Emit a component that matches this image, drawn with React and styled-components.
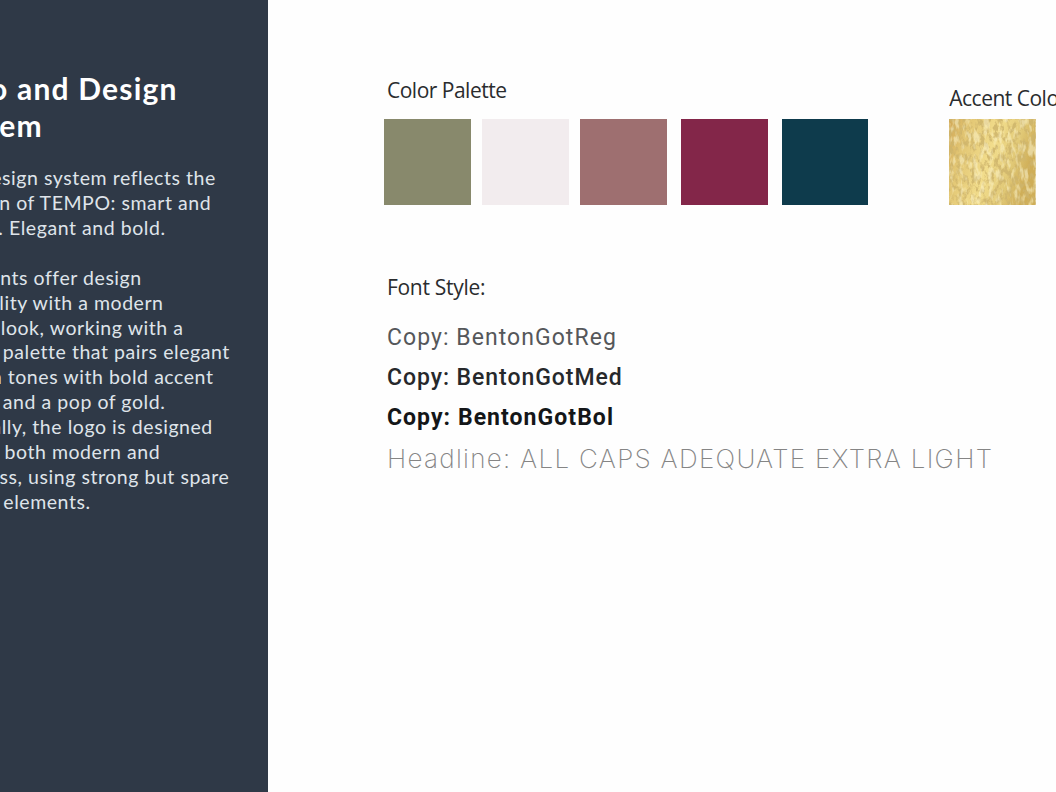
import React from "react";
import styled, { createGlobalStyle } from "styled-components";

const Global = createGlobalStyle`
  html, body { margin: 0; padding: 0; background: #fefefe; overflow: hidden; }
`;

const Page = styled.div`
  display: flex;
  width: 1056px;
  height: 792px;
  overflow: hidden;
  background: #fefefe;
`;

const Sidebar = styled.aside`
  flex: 0 0 268px;
  box-sizing: border-box;
  overflow: hidden;
  background: #2f3947;
  padding-top: 70px;
`;

const SidebarInner = styled.div`
  width: 330px;
  margin-left: -48px;
`;

const SideTitle = styled.h1`
  margin: 0 0 22px -13px;
  font: 700 30px/37px "Lato", sans-serif;
  color: #ffffff;
  letter-spacing: 1.2px;
  white-space: nowrap;
`;

const SideCopy = styled.p`
  margin: 0;
  font: 400 19.5px/24.92px "Lato", sans-serif;
  color: #dfe4ea;
  letter-spacing: 0.55px;
  white-space: pre;
`;

const Main = styled.main`
  flex: 1;
  min-width: 0;
  padding: 76px 0 0 116.3px;
`;

const PaletteRow = styled.section`
  display: flex;
  width: 720px;
`;

const PaletteGroup = styled.div`
  flex: 0 0 auto;
  margin-right: ${(p) => p.$after || 0}px;
`;

const GroupLabel = styled.div`
  height: 42.7px;
  padding: ${(p) => (p.$low ? "8px" : "0")} 0 0 ${(p) => p.$indent || 0}px;
  box-sizing: border-box;
  font: 400 21px/28px "Open Sans", sans-serif;
  letter-spacing: -0.5px;
  color: #2a2c2e;
  white-space: nowrap;
`;

const Swatches = styled.div`
  display: flex;
`;

const Swatch = styled.div`
  width: 86.6px;
  height: 86.6px;
  margin-right: ${(p) => p.$gap || 0}px;
  background: ${(p) => p.$color};
`;

const GoldSwatch = styled.svg`
  display: block;
  width: 86.6px;
  height: 86.6px;
`;

const FontSection = styled.section`
  margin: 66px 0 0 2.7px;
`;

const FontLabel = styled.div`
  margin-bottom: 17px;
  padding-top: 2px;
  font: 400 21px/28px "Open Sans", sans-serif;
  letter-spacing: -0.3px;
  color: #2a2c2e;
`;

const CopySample = styled.div`
  height: 39.7px;
  font: ${(p) => p.$weight} 23px/40px "Roboto", sans-serif;
  letter-spacing: ${(p) => p.$track}px;
  color: ${(p) => p.$color};
  white-space: nowrap;
`;

const Headline = styled.div`
  margin-top: 2px;
  font: 200 26px/40px "Inter", sans-serif;
  letter-spacing: 1.3px;
  color: #858585;
  white-space: nowrap;
`;

const swatches = [
  { color: "#88896c", gap: 11.6 },
  { color: "#f2ecee", gap: 11.2 },
  { color: "#9e6f70", gap: 14.1 },
  { color: "#832649", gap: 14.1 },
  { color: "#0e3b4c", gap: 0 },
];

const bodyText = `Its design system reflects the
notion of TEMPO: smart and
sleek. Elegant and bold.

All fonts offer design
usability with a modern
crisp look, working with a
color palette that pairs elegant
warm tones with bold accent
color and a pop of gold.
Visually, the logo is designed
to be both modern and
ageless, using strong but spare
basic elements.`;

function GoldLeaf() {
  return (
    <GoldSwatch viewBox="0 0 87 87" aria-hidden="true">
      <defs>
        <linearGradient id="goldBase" x1="0" y1="0" x2="1" y2="0.3">
          <stop offset="0" stopColor="#d0a654" />
          <stop offset="0.22" stopColor="#e2c674" />
          <stop offset="0.55" stopColor="#f2dd8c" />
          <stop offset="0.8" stopColor="#e2ca78" />
          <stop offset="1" stopColor="#cfae58" />
        </linearGradient>
        <filter id="goldGrain" x="0" y="0" width="100%" height="100%">
          <feTurbulence type="fractalNoise" baseFrequency="0.22 0.14" numOctaves="4" seed="7" />
          <feColorMatrix
            type="matrix"
            values="0 0 0 0 0.62  0 0 0 0 0.46  0 0 0 0 0.15  5 0 0 0 -2.2"
          />
        </filter>
        <filter id="goldShine" x="0" y="0" width="100%" height="100%">
          <feTurbulence type="fractalNoise" baseFrequency="0.2 0.08" numOctaves="3" seed="23" />
          <feColorMatrix
            type="matrix"
            values="0 0 0 0 0.97  0 0 0 0 0.9  0 0 0 0 0.58  0 4.5 0 0 -2.2"
          />
        </filter>
      </defs>
      <rect width="87" height="87" fill="url(#goldBase)" />
      <rect width="87" height="87" filter="url(#goldGrain)" opacity="0.85" />
      <rect width="87" height="87" filter="url(#goldShine)" opacity="0.55" />
    </GoldSwatch>
  );
}

export default function App() {
  return (
    <Page>
      <Global />
      <Sidebar>
        <SidebarInner>
          <SideTitle>
            Logo and Design
            <br />
            System
          </SideTitle>
          <SideCopy>{bodyText}</SideCopy>
        </SidebarInner>
      </Sidebar>
      <Main>
        <PaletteRow>
          <PaletteGroup $after={81}>
            <GroupLabel $indent={2.7}>Color Palette</GroupLabel>
            <Swatches>
              {swatches.map((s) => (
                <Swatch key={s.color} $color={s.color} $gap={s.gap} />
              ))}
            </Swatches>
          </PaletteGroup>
          <PaletteGroup>
            <GroupLabel $low>Accent Color</GroupLabel>
            <GoldLeaf />
          </PaletteGroup>
        </PaletteRow>
        <FontSection>
          <FontLabel>Font Style:</FontLabel>
          <CopySample $weight={400} $track={1.05} $color="#55575a">Copy: BentonGotReg</CopySample>
          <CopySample $weight={500} $track={0.95} $color="#26282b">Copy: BentonGotMed</CopySample>
          <CopySample $weight={700} $track={1.05} $color="#141618">Copy: BentonGotBol</CopySample>
          <Headline>Headline: ALL CAPS ADEQUATE EXTRA LIGHT</Headline>
        </FontSection>
      </Main>
    </Page>
  );
}
